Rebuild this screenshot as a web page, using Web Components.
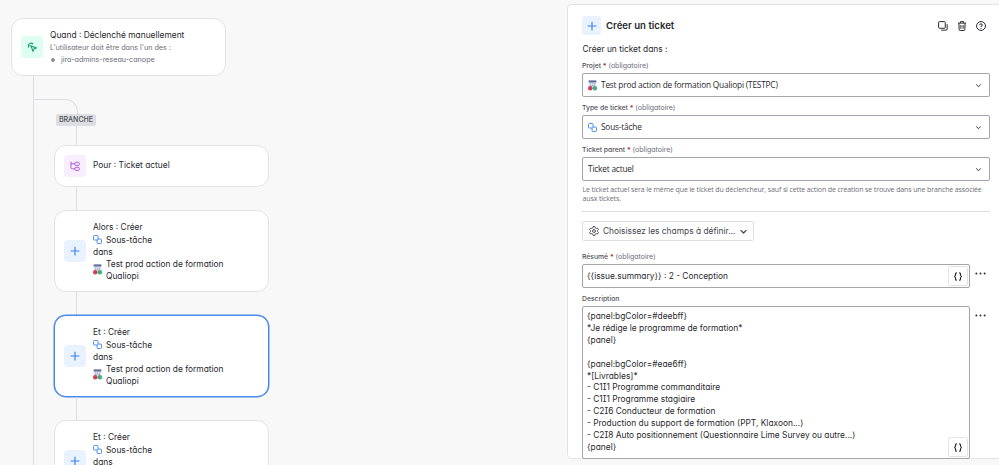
<!DOCTYPE html>
<html lang="fr">
<head>
<meta charset="utf-8">
<title>Automatisation</title>
<style>
  html, body {
    margin: 0;
    height: 100%;
    overflow: hidden;
    background: #f8f8f8;
  }
  body {
    font: 8.4px/12px Inter, "Liberation Sans", sans-serif;
    font-feature-settings: "cv11", "cv08";
    color: #292a2e;
  }
</style>
</head>
<body>
<automation-app></automation-app>

<script>
const define = (name, html, setup) => {
  const template = document.createElement('template')
  template.innerHTML = html

  customElements.define(name, class extends HTMLElement {
    constructor () {
      super()
      this.attachShadow({ mode: 'open' }).appendChild(template.content.cloneNode(true))
    }

    connectedCallback () {
      if (setup) setup(this, this.shadowRoot)
    }
  })
}

// all glyphs share a 16x16 box
const icons = {
  plus: '<path d="M8 1v14M1 8h14" stroke-width="1.8"/>',
  manual: '<path d="M6.6 6.4l8.4 3-3.8 1.7-1.7 3.9z" stroke-width="1.9"/><path d="M3.2 8.8A4.2 4.2 0 0 1 4 2.6a4.2 4.2 0 0 1 5.6.6" stroke-width="1.9"/><path d="M6.6 6.4l-2.8-.8" stroke-width="1.6"/>',
  branch: '<path d="M1.5 1v9.5a2 2 0 0 0 2 2H8M1.5 4.5H8" stroke-width="1.6"/><rect x="8" y="2" width="6.8" height="5" rx="1.6" stroke-width="1.6"/><rect x="8" y="10" width="6.8" height="5" rx="1.6" stroke-width="1.6"/>',
  subtask: '<rect x=".9" y=".9" width="8" height="8" rx="1.6" stroke-width="1.7"/><path d="M9 7.2h4.5a1.6 1.6 0 0 1 1.6 1.6v4.7a1.6 1.6 0 0 1-1.6 1.6H8.8a1.6 1.6 0 0 1-1.6-1.6V9" stroke-width="1.7"/>',
  project: '<g stroke="none"><rect x="1.2" y="-1" width="13.6" height="15" fill="#dcdfeb"/><rect x="1.2" y="-1" width="13.6" height="3.6" fill="#5e6c99"/><path d="M3.6 4.4h2v1.8h-2zM7 4.4h2v1.8H7zM10.4 4.4h2v1.8h-2zM3.6 7.2h2V9h-2zM7 7.2h2V9H7zM10.4 7.2h2V9h-2z" fill="#a5adc6"/><circle cx="4" cy="13" r="4" fill="#d33d55"/><circle cx="12.2" cy="13" r="4" fill="#3fae84"/></g>',
  copy: '<rect x="1" y="1" width="10.6" height="10.6" rx="1.2" stroke-width="1.6"/><path d="M14.6 5v8a1.6 1.6 0 0 1-1.6 1.6H5" stroke-width="1.6"/>',
  trash: '<path d="M1.5 3.4h13M5.5 3V1h5v2M3 3.6l.5 10a1.6 1.6 0 0 0 1.6 1.6h5.8a1.6 1.6 0 0 0 1.6-1.6l.5-10M6.2 6.4v6M9.8 6.4v6" stroke-width="1.6"/>',
  help: '<circle cx="8" cy="8" r="7.1" stroke-width="1.6"/><path d="M6 6.4A2 2 0 1 1 8 8.5v1.2" stroke-width="1.6"/><circle cx="8" cy="11.7" r=".9" fill="currentColor" stroke="none"/>',
  chevron: '<path d="M2.8 5.5L8 10.7l5.2-5.2" stroke-width="2.2"/>',
  gear: '<path d="M6.5 1h3l.5 2 1.6.9 2-.6 1.5 2.5-1.5 1.4v1.6l1.5 1.4-1.5 2.5-2-.6L10 13l-.5 2h-3L6 13l-1.6-.9-2 .6L.9 10.2l1.5-1.4V7.2L.9 5.8l1.5-2.5 2 .6L6 3z" stroke-width="1.5"/><circle cx="8" cy="8" r="2.3" stroke-width="1.5"/>',
  braces: '<path d="M6 1.5h-.7a1.7 1.7 0 0 0-1.7 1.7v2.6L1.8 8l1.8 2.2v2.6a1.7 1.7 0 0 0 1.7 1.7H6M10 1.5h.7a1.7 1.7 0 0 1 1.7 1.7v2.6L14.2 8l-1.8 2.2v2.6a1.7 1.7 0 0 1-1.7 1.7H10" stroke-width="2"/>',
  more: '<g fill="currentColor" stroke="none"><circle cx="2" cy="8" r="1.4"/><circle cx="8" cy="8" r="1.4"/><circle cx="14" cy="8" r="1.4"/></g>'
}

define('ui-icon', `
<style>
  :host { display: block; flex: none; width: 9px; height: 9px; }
  svg {
    display: block;
    width: 100%;
    height: 100%;
    overflow: visible;
    fill: none;
    stroke: currentColor;
    stroke-linejoin: round;
  }
</style>
<svg viewBox="0 0 16 16"></svg>
`, (el, root) => {
  root.querySelector('svg').innerHTML = icons[el.getAttribute('name')]
})

define('icon-tile', `
<style>
  :host {
    display: flex;
    flex: none;
    align-items: center;
    justify-content: center;
    width: 22px;
    height: 22px;
    border-radius: 4px;
    color: #3b7ff0;
    background: #e9f2ff;
  }
  :host([tone="green"]) { color: #22a06b; background: #dcfff1; }
  :host([tone="purple"]) { color: #af59e1; background: #f8eefe; }
  ::slotted(ui-icon) { width: 10px; height: 10px; }
</style>
<slot></slot>
`)

define('flow-node', `
<style>
  :host {
    box-sizing: border-box;
    display: flex;
    align-items: center;
    gap: 7px;
    width: 215px;
    height: 82px;
    padding: 0 9px;
    border: 1px solid #e3e3e5;
    border-radius: 12px;
    background: #fff;
  }
  :host([selected]) {
    border-color: #4688ec;
    box-shadow: 0 0 0 .5px #4688ec;
  }
</style>
<slot name="icon"></slot>
<div><slot></slot></div>
`)

define('flow-line', `
<style>
  :host { display: block; width: 1px; height: 23px; margin-left: 22px; background: #dddee1; }
</style>
`)

define('create-summary', `
<style>
  :host { display: block; }
  .row { display: flex; align-items: center; gap: 4px; }
  .type { height: 12px; padding-top: 1px; }
  .type ui-icon { color: #4688ec; }
  :host([clipped]) .project { visibility: hidden; }
</style>
<div><slot></slot></div>
<div class="row type"><ui-icon name="subtask"></ui-icon><span>Sous-tâche</span></div>
<div>dans</div>
<div class="row project"><ui-icon name="project"></ui-icon><span>Test prod action de formation<br>Qualiopi</span></div>
`)

define('flow-canvas', `
<style>
  :host { display: block; box-sizing: border-box; width: 567px; padding: 18px 0 0 11px; }
  .root { height: 58px; }
  .title { line-height: 13px; }
  .sub { font-size: 7.2px; line-height: 12px; color: #6b6e76; }
  .bullet { display: flex; align-items: center; gap: 6px; padding-left: 1px; }
  .bullet::before { content: ""; width: 2px; height: 2px; border: .7px solid #8c8f97; border-radius: 50%; background: #8c8f97; }
  .trunk { margin-left: 22px; padding-left: 20px; border-left: 1px solid #dddee1; height: 400px; }
  .elbow {
    box-sizing: border-box;
    width: 44px;
    height: 15px;
    margin: 0 0 0 -20px;
    border: solid #dddee1;
    border-width: 1px 1px 0 0;
    border-top-right-radius: 13px;
  }
  .gap { height: 23px; }
  .tag {
    display: block;
    width: 40px;
    height: 12px;
    margin-left: 2px;
    border-radius: 2px;
    background: #dddee1;
    color: #505258;
    font-size: 7.1px;
    font-weight: 500;
    letter-spacing: -.05px;
    text-align: center;
  }
  .last { height: 19px; }
  .small { height: 42px; }
  .scope { padding-bottom: 2px; }
</style>
<flow-node class="root">
  <icon-tile slot="icon" tone="green"><ui-icon name="manual"></ui-icon></icon-tile>
  <div class="title">Quand : Déclenché manuellement</div>
  <div class="sub">L'utilisateur doit être dans l'un des :</div>
  <div class="sub bullet">jira-admins-reseau-canope</div>
</flow-node>
<div class="trunk">
  <div class="gap"></div>
  <div class="elbow"></div>
  <span class="tag">BRANCHE</span>
  <flow-line class="last"></flow-line>
  <flow-node class="small">
    <icon-tile slot="icon" tone="purple"><ui-icon name="branch"></ui-icon></icon-tile>
    <div class="scope">Pour : Ticket actuel</div>
  </flow-node>
  <flow-line></flow-line>
  <flow-node>
    <icon-tile slot="icon"><ui-icon name="plus"></ui-icon></icon-tile>
    <create-summary>Alors : Créer</create-summary>
  </flow-node>
  <flow-line></flow-line>
  <flow-node selected>
    <icon-tile slot="icon"><ui-icon name="plus"></ui-icon></icon-tile>
    <create-summary>Et : Créer</create-summary>
  </flow-node>
  <flow-line></flow-line>
  <flow-node>
    <icon-tile slot="icon"><ui-icon name="plus"></ui-icon></icon-tile>
    <create-summary clipped>Et : Créer</create-summary>
  </flow-node>
</div>
`)

define('form-field', `
<style>
  :host { display: block; }
  label { display: block; height: 14px; line-height: 13px; font-size: 6.8px; font-weight: 500; color: #505258; }
  b { color: #ae2e24; font-weight: 700; }
  .opt { font-size: 7px; font-weight: 400; color: #6b6e76; }
</style>
<label><span class="name"></span></label>
<slot></slot>
`, (el, root) => {
  root.querySelector('.name').textContent = el.getAttribute('label')
  if (el.hasAttribute('required')) {
    root.querySelector('label').insertAdjacentHTML('beforeend', ' <b>*</b> <span class="opt">(obligatoire)</span>')
  }
})

define('select-box', `
<style>
  :host {
    box-sizing: border-box;
    display: flex;
    align-items: center;
    gap: 4px;
    height: 24px;
    padding: 0 7px 0 5px;
    border: 1px solid #a3a5ad;
    border-radius: 2px;
    background: #fff;
    font-family: "Open Sans", sans-serif;
    font-size: 8.3px;
    letter-spacing: -.19px;
  }
  .arrow { width: 7px; height: 7px; margin-left: auto; }
</style>
<slot></slot>
<ui-icon class="arrow" name="chevron"></ui-icon>
`)

define('smart-input', `
<style>
  :host { display: flex; gap: 5px; }
  .box {
    box-sizing: border-box;
    display: flex;
    width: 388px;
    height: 24px;
    padding: 1px 1px 1px 4px;
    border: 1px solid #a3a5ad;
    border-radius: 2px;
    background: #fff;
    line-height: 20px;
  }
  :host([multiline]) .box { height: 153px; padding: 4px 1px 1px 4px; line-height: 11.9px; }
  .text { flex: 1; white-space: pre; }
  .smart {
    box-sizing: border-box;
    display: flex;
    align-items: center;
    justify-content: center;
    align-self: flex-end;
    width: 20px;
    height: 20px;
    border: 1px solid #e3e3e5;
    border-radius: 2px;
    background: #fff;
  }
  .smart ui-icon { width: 10px; height: 9px; }
  .more { width: 11px; height: 11px; margin-top: 4px; }
</style>
<div class="box"><div class="text"><slot></slot></div><div class="smart"><ui-icon name="braces"></ui-icon></div></div>
<ui-icon class="more" name="more"></ui-icon>
`)

define('config-panel', `
<style>
  :host {
    box-sizing: border-box;
    display: block;
    width: 432px;
    height: 455px;
    margin-top: 4px;
    padding: 11px 9px 0 14px;
    border: 1px solid #e3e3e5;
    border-right: 0;
    border-radius: 5px 0 0 5px;
    background: #fff;
  }
  header { display: flex; align-items: center; height: 19px; }
  header icon-tile { width: 19px; height: 19px; border-radius: 3px; }
  h1 { flex: 1; margin: 0 0 0 5px; font-size: 9.6px; font-weight: 600; }
  .tools { display: flex; gap: 9px; margin-right: 4.5px; }
  .tools ui-icon { width: 10px; height: 10px; }
  .intro { margin: 8px 0 4px; padding-left: .5px; }
  form-field { margin-bottom: 4px; }
  .hint {
    margin: 2px 0 7.2px;
    padding-left: .5px;
    font: 7px/9.4px "Open Sans", sans-serif;
    letter-spacing: -.115px;
    white-space: nowrap;
    color: #6b6e76;
  }
  hr { height: 1px; margin: 0 0 9px; border: 0; background: #dddee1; }
  .fields {
    box-sizing: border-box;
    display: flex;
    align-items: center;
    gap: 4px;
    width: 172px;
    height: 20px;
    margin-bottom: 9px;
    padding: 0 5px 0 6px;
    border: 1px solid #dddee1;
    border-radius: 2px;
    color: #44464d;
    white-space: nowrap;
  }
  .fields ui-icon:first-child { width: 10px; height: 10px; }
  .subtask { color: #4688ec; }
</style>
<header>
  <icon-tile><ui-icon name="plus"></ui-icon></icon-tile>
  <h1>Créer un ticket</h1>
  <div class="tools"><ui-icon name="copy"></ui-icon><ui-icon name="trash"></ui-icon><ui-icon name="help"></ui-icon></div>
</header>
<div class="intro">Créer un ticket dans :</div>
<form-field label="Projet" required>
  <select-box><ui-icon name="project"></ui-icon><span>Test prod action de formation Qualiopi (TESTPC)</span></select-box>
</form-field>
<form-field label="Type de ticket" required>
  <select-box><ui-icon class="subtask" name="subtask"></ui-icon><span>Sous-tâche</span></select-box>
</form-field>
<form-field label="Ticket parent" required>
  <select-box><span>Ticket actuel</span></select-box>
</form-field>
<div class="hint">Le ticket actuel sera le même que le ticket du déclencheur, sauf si cette action de création se trouve dans une branche associée<br>ausx tickets.</div>
<hr>
<div class="fields"><ui-icon name="gear"></ui-icon><span>Choisissez les champs à définir...</span><ui-icon name="chevron"></ui-icon></div>
<form-field label="Résumé" required><smart-input>{{issue.summary}} : 2 - Conception</smart-input></form-field>
<form-field label="Description"><smart-input multiline>{panel:bgColor=#deebff}
*Je rédige le programme de formation*
{panel}

{panel:bgColor=#eae6ff}
*[Livrables]*
- C1I1 Programme commanditaire
- C1I1 Programme stagiaire
- C2I6 Conducteur de formation
- Production du support de formation (PPT, Klaxoon...)
- C2I8 Auto positionnement (Questionnaire Lime Survey ou autre...)
{panel}</smart-input></form-field>
`)

define('automation-app', `
<style>
  :host { display: flex; width: 999px; height: 465px; overflow: hidden; }
</style>
<flow-canvas></flow-canvas>
<config-panel></config-panel>
`)
</script>
</body>
</html>
